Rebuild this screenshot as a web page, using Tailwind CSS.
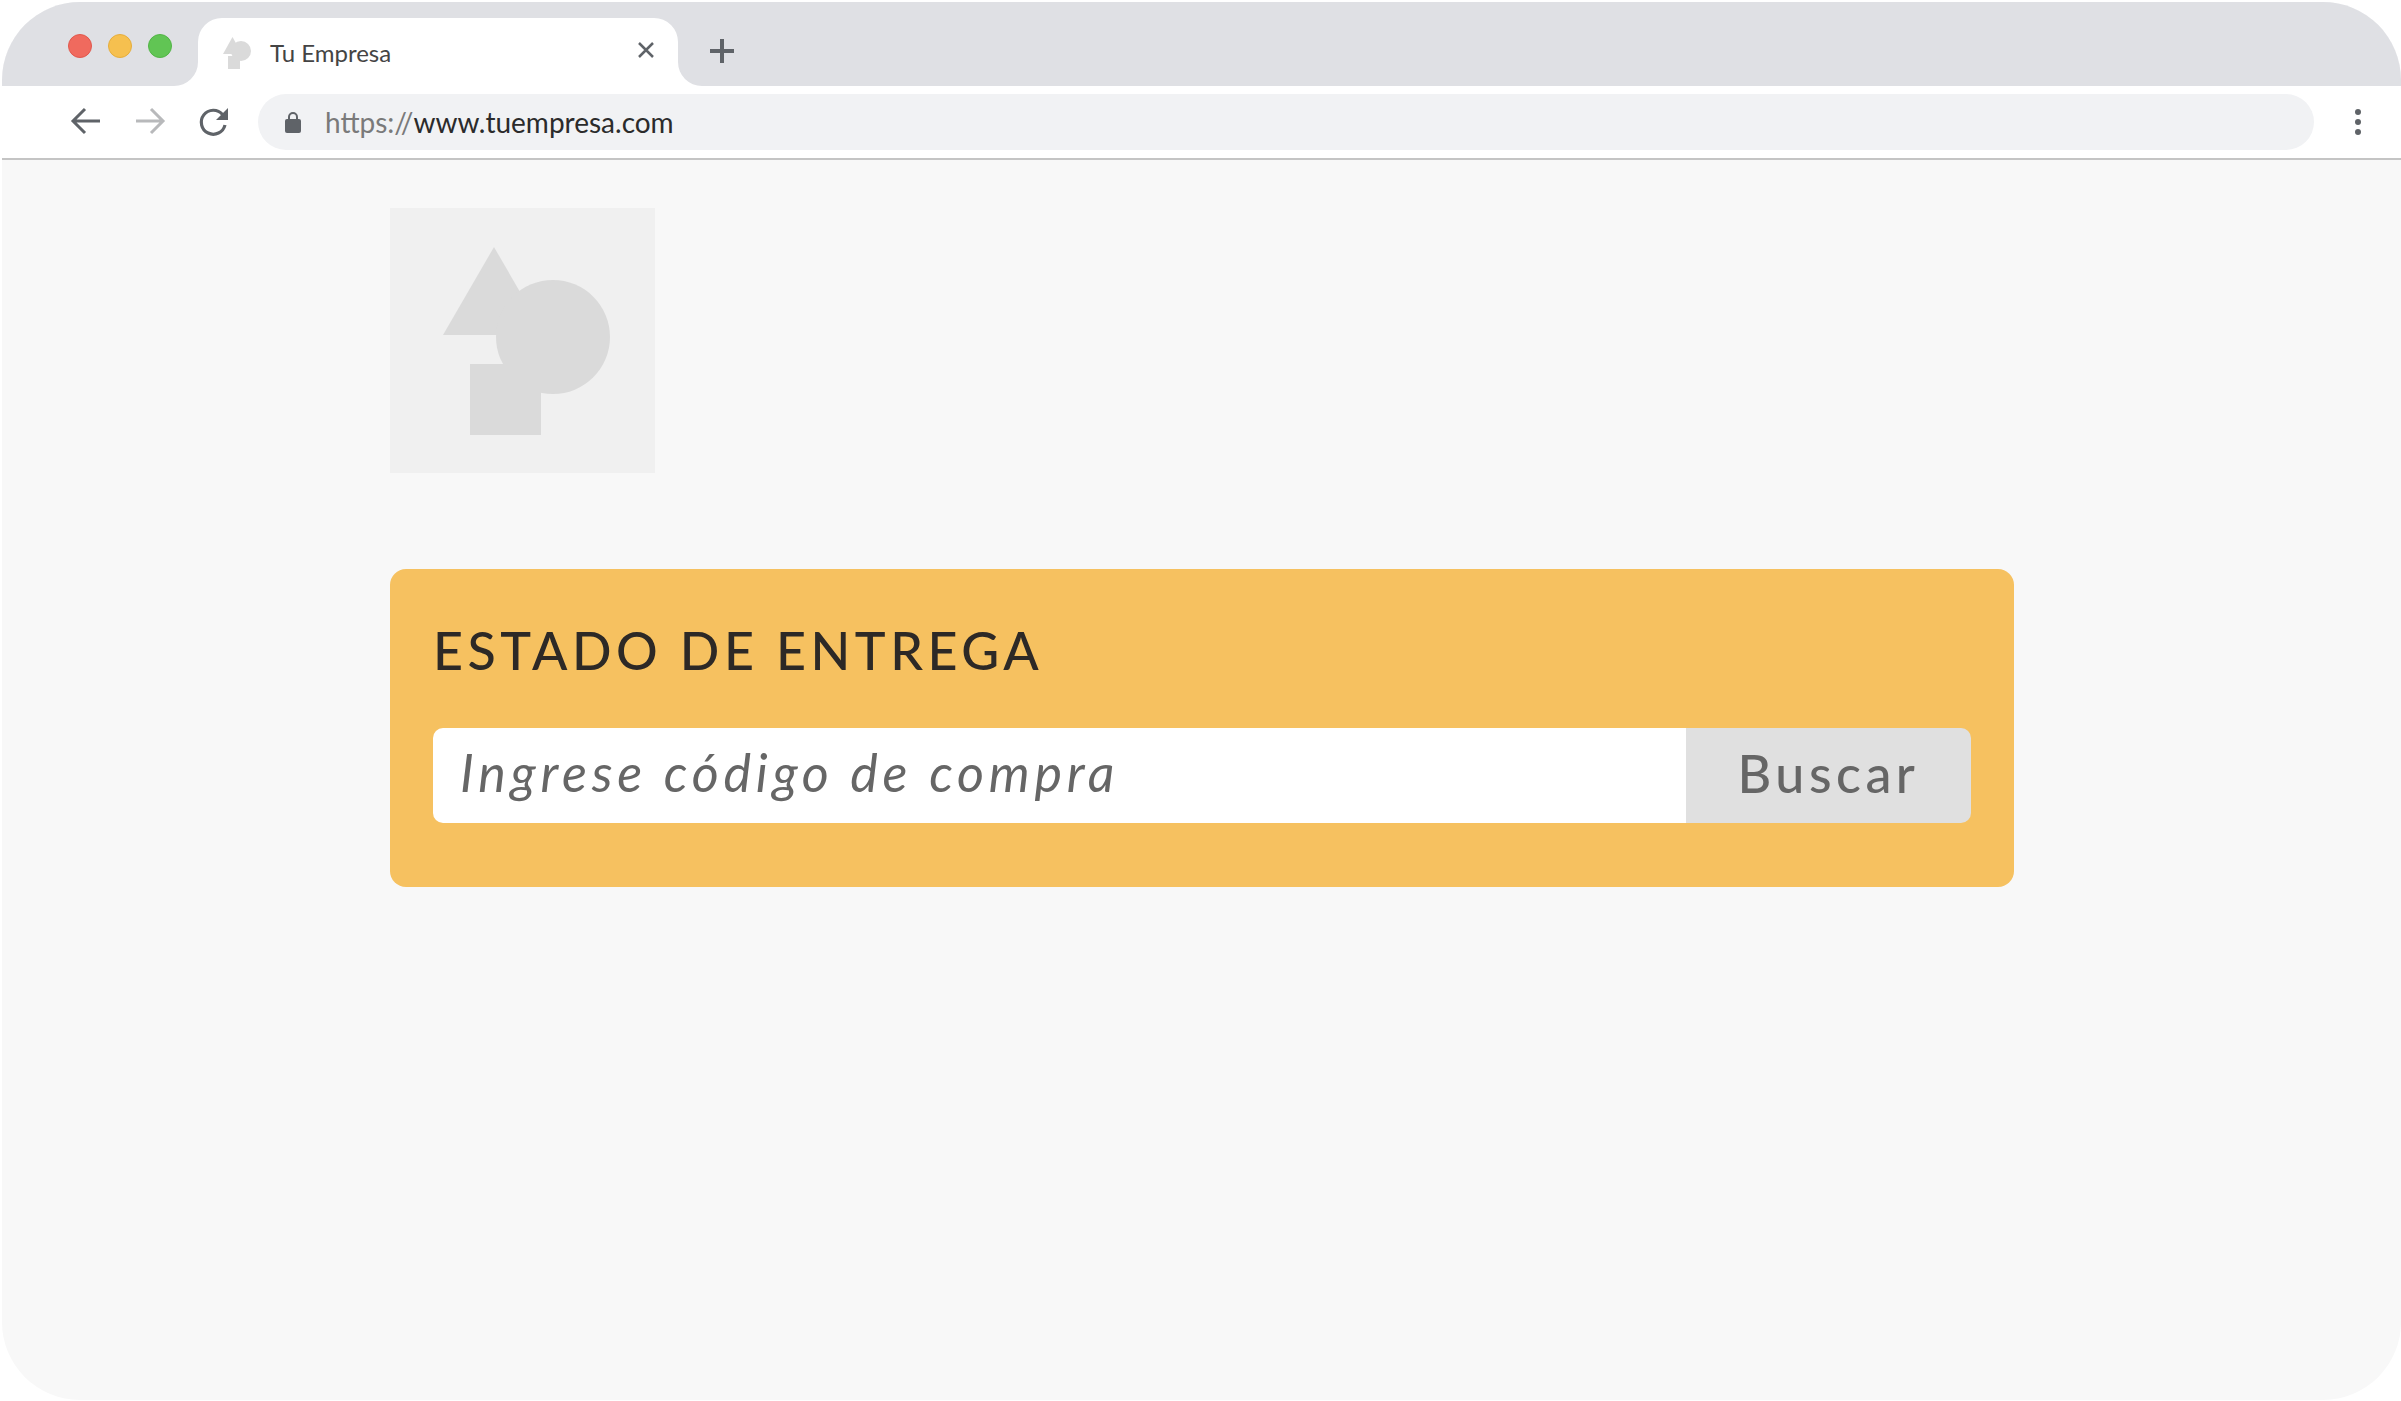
<!DOCTYPE html>
<html lang="es">
<head>
  <meta charset="utf-8">
  <title>Tu Empresa</title>
  <script src="https://cdn.jsdelivr.net/npm/@tailwindcss/browser@4"></script>
</head>
<body class="bg-white font-['Lato',sans-serif]">

  <div class="ml-[2px] mt-[2px] w-[2399px] h-[1398px] rounded-[78px] overflow-hidden bg-[#f8f8f8] flex flex-col">

    <!-- tab strip -->
    <div class="flex h-[84px] bg-white">
      <div class="w-[196px] bg-[#dfe0e4] rounded-br-[24px] flex items-start gap-[16px] pl-[66px] pt-[32px]">
        <span class="w-[24px] h-[24px] rounded-full bg-[#f06a5e] border border-[#e0584d]"></span>
        <span class="w-[24px] h-[24px] rounded-full bg-[#f6c04f] border border-[#e5ad3c]"></span>
        <span class="w-[24px] h-[24px] rounded-full bg-[#61c554] border border-[#52b446]"></span>
      </div>
      <div class="w-[480px] bg-[#dfe0e4] pt-[16px]">
        <div class="h-[68px] bg-white rounded-t-[24px] flex items-center pl-[25px] pr-[23px]">
          <svg class="w-[28px] h-[32px] mt-[2px]" viewBox="0 0 28 32" fill="#dadada">
            <path d="M9.500 0 L19 17 L0 17 Z"/>
            <circle cx="18" cy="14" r="10"/>
            <rect x="5" y="19" width="12" height="13"/>
          </svg>
          <span class="ml-[19px] mt-[2px] text-[24px] text-[#444] leading-none">Tu Empresa</span>
          <svg class="ml-auto w-[18px] h-[18px] -mt-[4px]" viewBox="0 0 18 18" fill="none" stroke="#5f6368" stroke-width="2.500">
            <path d="M2 2 L16 16 M16 2 L2 16"/>
          </svg>
        </div>
      </div>
      <div class="flex-1 bg-[#dfe0e4] rounded-bl-[24px] pl-[31px] pt-[36px]">
        <svg class="w-[26px] h-[26px]" viewBox="0 0 26 26" fill="none" stroke="#5f6368" stroke-width="4">
          <path d="M13 1 V25 M1 13 H25"/>
        </svg>
      </div>
    </div>

    <!-- toolbar -->
    <div class="h-[74px] bg-white border-b-2 border-[#c4c4c4] flex items-center pl-[68px]">
      <svg class="w-[32px] h-[32px]" viewBox="0 0 32 32" fill="none" stroke="#5f6368" stroke-width="3">
        <path d="M30 15 H4 M15 3 L3 15 L15 27"/>
      </svg>
      <svg class="ml-[32px] w-[32px] h-[32px]" viewBox="0 0 32 32" fill="none" stroke="#b8b9bb" stroke-width="3">
        <path d="M2 15 H28 M17 3 L29 15 L17 27"/>
      </svg>
      <svg class="ml-[32px] w-[32px] h-[32px]" viewBox="0 0 32 32" fill="none">
        <path d="M24.500 8.500 A12 12 0 1 0 27 19" stroke="#5f6368" stroke-width="3.200"/>
        <path d="M30 2 V14 H18 Z" fill="#5f6368"/>
      </svg>
      <div class="ml-[28px] w-[2056px] h-[56px] rounded-full bg-[#f1f2f4] flex items-center pl-[27px]">
        <svg class="w-[16px] h-[22px]" viewBox="0 0 16 22">
          <path d="M4 9 V6 A4 4 0 0 1 12 6 V9" fill="none" stroke="#5f6368" stroke-width="2"/>
          <rect x="0" y="8" width="16" height="14" rx="2" fill="#5f6368"/>
        </svg>
        <span class="ml-[24px] text-[28px] leading-none text-[#7a7a7a]">https://<span class="text-[#2b2b2b]">www.tuempresa.com</span></span>
      </div>
      <div class="ml-[41px] flex flex-col gap-[4px]">
        <span class="w-[6px] h-[6px] rounded-full bg-[#5f6368]"></span>
        <span class="w-[6px] h-[6px] rounded-full bg-[#5f6368]"></span>
        <span class="w-[6px] h-[6px] rounded-full bg-[#5f6368]"></span>
      </div>
    </div>

    <!-- page -->
    <div class="flex-1 pl-[388px] pt-[48px]">
      <div class="w-[265px] h-[265px] bg-[#f0f0f0] flex items-center justify-center">
        <svg class="w-[265px] h-[265px]" viewBox="0 0 265 265" fill="#dadada">
          <path d="M104 39 L155 127 L53 127 Z"/>
          <circle cx="163" cy="129" r="57"/>
          <rect x="80" y="156" width="71" height="71"/>
        </svg>
      </div>

      <div class="mt-[96px] w-[1624px] h-[318px] rounded-[16px] bg-[#f6c160] pt-[51px] px-[43px]">
        <h1 class="h-[60px] leading-[60px] text-[52px] font-medium tracking-[4.500px] text-[#2d2926]">ESTADO DE ENTREGA</h1>
        <div class="mt-[48px] flex h-[95px] rounded-[10px] overflow-hidden">
          <input class="flex-1 bg-white pl-[27px] pb-[8px] text-[52px] italic font-normal tracking-[4.750px] outline-none placeholder:text-[#666]" placeholder="Ingrese código de compra">
          <button class="w-[285px] bg-[#e0e0e0] pb-[6px] text-[52px] font-medium tracking-[4.500px] text-[#666]">Buscar</button>
        </div>
      </div>
    </div>
  </div>

</body>
</html>
